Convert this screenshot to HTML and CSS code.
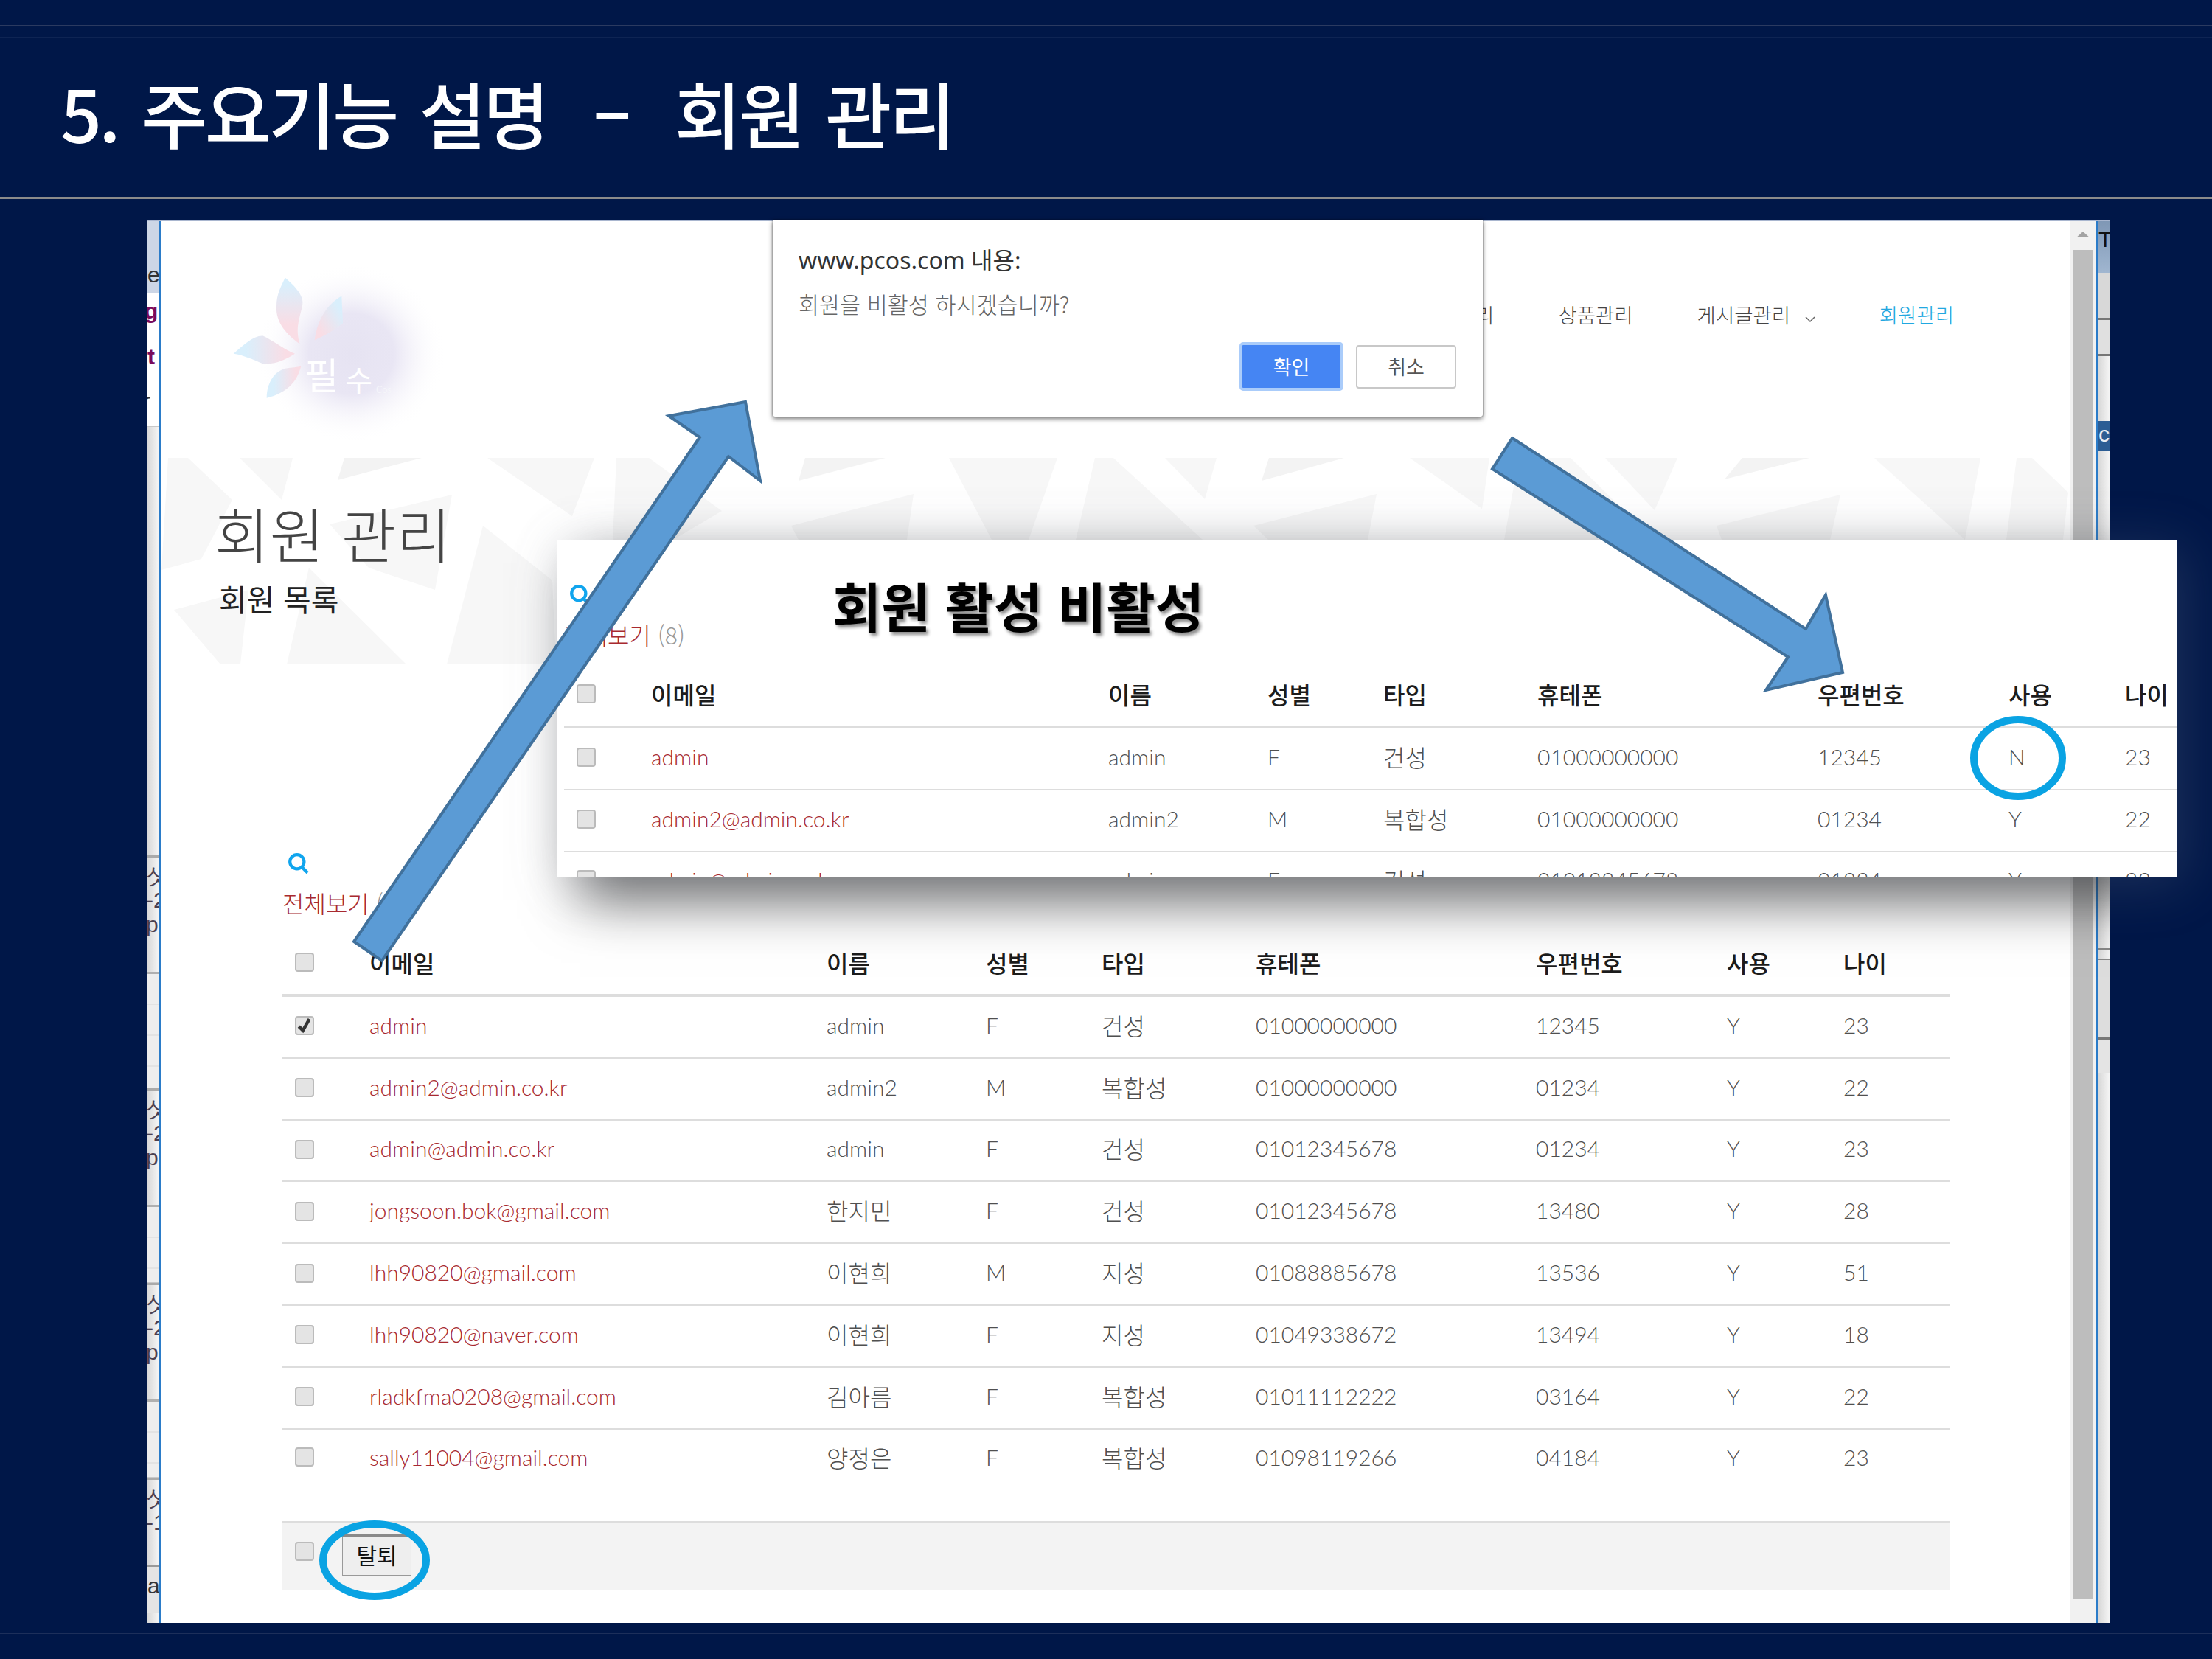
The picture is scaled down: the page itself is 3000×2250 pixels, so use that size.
FILE: index.html
```html
<!DOCTYPE html>
<html lang="ko">
    <head>
        <meta charset="utf-8"/>
        <title>주요기능 설명 - 회원 관리</title>
        <link rel="stylesheet" href="styles.css">
    </head>
    <body>
        <div class="slide">
            <div class="topLine"></div>
            <div class="topLine faint"></div>
            <h1 class="slideTitle">5. 주요기능 설명  –  회원 관리</h1>

            <div class="shot">
                <div class="stripLeft">
                    <div class="sl sl1">e</div>
                    <div class="sl sl2">g</div>
                    <div class="sl sl3">t</div>
                    <div class="sl sl4">r</div>
                    <div class="sl sl5"></div>
                    <div class="sl sl6">싯<br>-2<br>p</div>
                    <div class="sl sl7"></div>
                    <div class="sl sl6">싯<br>-2<br>p</div>
                    <div class="sl sl7 short"></div>
                    <div class="sl sl6">싯<br>-2<br>p</div>
                    <div class="sl sl7 short"></div>
                    <div class="sl sl6 last">싯<br>-1</div>
                    <div class="sl sl8">a</div>
                </div>

                <div class="shotMain">
                    <div class="siteTop">
                        <svg class="logo" viewBox="300 150 1050 800">
                            <defs>
                                <radialGradient id="blob">
                                    <stop offset="0" stop-color="#e6e3f2"/>
                                    <stop offset=".45" stop-color="#e9e6f4"/>
                                    <stop offset="1" stop-color="#ffffff" stop-opacity="0"/>
                                </radialGradient>
                                <linearGradient id="petalDown" x1="0" y1="0" x2="0" y2="1">
                                    <stop offset=".1" stop-color="#d9effc"/>
                                    <stop offset=".7" stop-color="#f9dde5"/>
                                </linearGradient>
                                <linearGradient id="petalSide" x1="1" y1="0" x2="0" y2="1">
                                    <stop offset=".2" stop-color="#d9effc"/>
                                    <stop offset=".8" stop-color="#f9dde5"/>
                                </linearGradient>
                                <linearGradient id="petalRight" x1="0" y1="0" x2="1" y2="0">
                                    <stop offset=".2" stop-color="#d9effc"/>
                                    <stop offset=".85" stop-color="#f9dde5"/>
                                </linearGradient>
                            </defs>
                            <ellipse cx="830" cy="545" rx="385" ry="365" fill="url(#blob)"/>
                            <path d="M560 235C600 270 640 310 630 350C620 400 600 440 620 505C570 470 520 420 525 350C525 300 545 270 560 235Z" fill="url(#petalDown)"/>
                            <path d="M790 310L795 420C760 450 720 470 680 490C690 420 720 350 790 310Z" fill="url(#petalSide)"/>
                            <path d="M350 545C390 510 430 470 470 472C510 490 560 530 600 545C560 570 520 590 470 585C430 570 390 550 350 545Z" fill="url(#petalRight)"/>
                            <path d="M625 595C610 650 580 700 485 725C485 670 510 620 560 605C590 600 610 600 625 595Z" fill="url(#petalRight)"/>
                            <text class="logoWord" x="640" y="690" font-size="150">필</text>
                            <text class="logoWord" x="805" y="700" font-size="120">수</text>
                            <text class="logoCos" x="930" y="706" font-size="38">Cos</text>
                        </svg>
                        <nav class="siteNav">
                            <a>주문관리</a>
                            <a>상품관리</a>
                            <a>게시글관리
                                <svg class="chevron" viewBox="0 0 14 9"><path d="M1 1l6 6 6-6"/></svg>
                            </a>
                            <a class="active">회원관리</a>
                        </nav>
                    </div>

                    <div class="pageHead">
                        <svg class="watermark" viewBox="219 621 2588 280" preserveAspectRatio="none">
                            <polygon points="228,621 255,621 315,678 273,758 219,773"/>
                            <polygon points="325,621 397,621 382,678"/>
                            <polygon class="wmDark" points="467,621 572,621 458,651"/>
                            <polygon points="613,671 447,711 500,770 590,800"/>
                            <polygon points="236,827 337,800 326,901 299,901"/>
                            <polygon points="419,770 551,901 389,901"/>
                            <polygon points="655,713 749,787 754,901 606,901"/>
                            <polygon points="661,621 806,621 776,700"/>
                            <polygon points="836,621 880,621 979,693 913,732 831,732"/>
                            <polygon class="wmDark" points="1092,621 1201,621 1083,652"/>
                            <polygon points="1073,713 1239,670 1230,732 1083,732"/>
                            <polygon points="1287,621 1434,621 1395,732 1345,732"/>
                            <polygon points="1485,621 1510,621 1631,732 1459,732"/>
                            <polygon points="1580,621 1650,621 1634,677"/>
                            <polygon class="wmDark" points="1721,621 1823,621 1711,652"/>
                            <polygon points="1867,670 1855,732 1720,732 1700,713"/>
                            <polygon points="1912,621 2020,621 2010,690"/>
                            <polygon points="2060,621 2130,621 2200,690 2180,732 2040,732"/>
                            <polygon points="2177,621 2275,621 2244,692"/>
                            <polygon class="wmDark" points="2363,621 2454,621 2339,650"/>
                            <polygon points="2496,671 2328,713 2335,732 2482,732"/>
                            <polygon points="2542,621 2686,621 2665,732"/>
                            <polygon points="2735,621 2756,621 2805,668 2798,732 2721,732"/>
                        </svg>
                        <h2 class="pageTitle">회원 관리</h2>
                        <p class="pageSub">회원 목록</p>
                    </div>

                    <div class="memberList">
                        <svg class="searchIcon" viewBox="0 0 30 30"><circle cx="12" cy="12" r="9"/><path d="M18.500 19l7 7"/></svg>
                        <div class="showAll"><a>전체보기</a> <span>(8)</span></div>
                        <table class="members">
                            <colgroup>
                                <col class="c0"><col class="c1"><col class="c2"><col class="c3"><col class="c4"><col class="c5"><col class="c6"><col class="c7"><col class="c8">
                            </colgroup>
                            <thead>
                                <tr><th><span class="chk"></span></th><th>이메일</th><th>이름</th><th>성별</th><th>타입</th><th>휴테폰</th><th>우편번호</th><th>사용</th><th>나이</th></tr>
                            </thead>
                            <tbody>
                                <tr><td><span class="chk checked"><svg viewBox="0 0 20 20"><path d="M3 11l5 5 8-14"/></svg></span></td><td><a>admin</a></td><td>admin</td><td>F</td><td class="ko">건성</td><td>01000000000</td><td>12345</td><td>Y</td><td>23</td></tr>
                                <tr><td><span class="chk"></span></td><td><a>admin2@admin.co.kr</a></td><td>admin2</td><td>M</td><td class="ko">복합성</td><td>01000000000</td><td>01234</td><td>Y</td><td>22</td></tr>
                                <tr><td><span class="chk"></span></td><td><a>admin@admin.co.kr</a></td><td>admin</td><td>F</td><td class="ko">건성</td><td>01012345678</td><td>01234</td><td>Y</td><td>23</td></tr>
                                <tr><td><span class="chk"></span></td><td><a>jongsoon.bok@gmail.com</a></td><td class="ko">한지민</td><td>F</td><td class="ko">건성</td><td>01012345678</td><td>13480</td><td>Y</td><td>28</td></tr>
                                <tr><td><span class="chk"></span></td><td><a>lhh90820@gmail.com</a></td><td class="ko">이현희</td><td>M</td><td class="ko">지성</td><td>01088885678</td><td>13536</td><td>Y</td><td>51</td></tr>
                                <tr><td><span class="chk"></span></td><td><a>lhh90820@naver.com</a></td><td class="ko">이현희</td><td>F</td><td class="ko">지성</td><td>01049338672</td><td>13494</td><td>Y</td><td>18</td></tr>
                                <tr><td><span class="chk"></span></td><td><a>rladkfma0208@gmail.com</a></td><td class="ko">김아름</td><td>F</td><td class="ko">복합성</td><td>01011112222</td><td>03164</td><td>Y</td><td>22</td></tr>
                                <tr><td><span class="chk"></span></td><td><a>sally11004@gmail.com</a></td><td class="ko">양정은</td><td>F</td><td class="ko">복합성</td><td>01098119266</td><td>04184</td><td>Y</td><td>23</td></tr>
                            </tbody>
                        </table>
                        <div class="listFoot">
                            <span class="chk"></span>
                            <button class="leaveBtn">탈퇴</button>
                        </div>
                    </div>
                </div>

                <div class="scrollTrack">
                    <div class="scrollUp"></div>
                    <div class="scrollThumb"></div>
                </div>

                <div class="stripRight">
                    <div class="sr sr1">T_</div>
                    <div class="sr sr2"></div>
                    <div class="sr sr3"></div>
                    <div class="sr sr4"></div>
                    <div class="sr sr5">co</div>
                    <div class="sr sr6"></div>
                    <div class="sr sr7"></div>
                    <div class="sr sr8"></div>
                    <div class="sr sr9"></div>
                </div>

                <div class="overlayShadow"></div>
            </div>

            <div class="slideFoot"></div>

            <div class="alertBox">
                <div class="alertHost">www.pcos.com 내용:</div>
                <div class="alertText">회원을 비활성 하시겠습니까?</div>
                <div class="alertBtns">
                    <button class="okBtn">확인</button>
                    <button class="cancelBtn">취소</button>
                </div>
            </div>

            <div class="overlay">
                <div class="overlayTitle">회원 활성 비활성</div>
                <svg class="searchIcon" viewBox="0 0 30 30"><circle cx="12" cy="12" r="9"/><path d="M18.500 19l7 7"/></svg>
                <div class="showAll"><a>전체보기</a> <span>(8)</span></div>
                <table class="members">
                    <colgroup>
                        <col class="c0"><col class="c1"><col class="c2"><col class="c3"><col class="c4"><col class="c5"><col class="c6"><col class="c7"><col class="c8">
                    </colgroup>
                    <thead>
                        <tr><th><span class="chk"></span></th><th>이메일</th><th>이름</th><th>성별</th><th>타입</th><th>휴테폰</th><th>우편번호</th><th>사용</th><th>나이</th></tr>
                    </thead>
                    <tbody>
                        <tr><td><span class="chk"></span></td><td><a>admin</a></td><td>admin</td><td>F</td><td class="ko">건성</td><td>01000000000</td><td>12345</td><td>N</td><td>23</td></tr>
                        <tr><td><span class="chk"></span></td><td><a>admin2@admin.co.kr</a></td><td>admin2</td><td>M</td><td class="ko">복합성</td><td>01000000000</td><td>01234</td><td>Y</td><td>22</td></tr>
                        <tr><td><span class="chk"></span></td><td><a>admin@admin.co.kr</a></td><td>admin</td><td>F</td><td class="ko">건성</td><td>01012345678</td><td>01234</td><td>Y</td><td>23</td></tr>
                    </tbody>
                </table>
            </div>

            <svg class="marks" viewBox="0 0 3000 2250">
                <polygon class="arrow" points="1011,545 907,564 949,593 480,1277 518,1303 988,619 1031,652"/>
                <polygon class="arrow" points="2051,594 2024,636 2425,891 2395,936 2499,912 2476,807 2449,853"/>
                <ellipse class="ring" cx="2737" cy="1028" rx="60" ry="52"/>
                <ellipse class="ring" cx="508" cy="2116" rx="70" ry="49"/>
            </svg>
        </div>
    </body>
</html>
```
FILE: styles.css
```css
* {
    box-sizing: border-box;
}

html, body {
    margin: 0;
    background: #001748;
}

body {
    font-family: "Lato", "Noto Sans CJK KR", sans-serif;
    font-weight: 300;
    color: #555555;
}

.slide {
    position: relative;
    width: 3000px;
    height: 2250px;
    overflow: hidden;
    background: #001748;
}

.topLine {
    height: 35px;
    border-bottom: 1px solid #2b3a60;
}

.topLine.faint {
    height: 16px;
    border-bottom: 1px solid #0e2453;
}

.slideTitle {
    height: 219px;
    margin: 0;
    padding: 35px 0 0 82px;
    border-bottom: 3px solid #8b8b8b;
    font-family: "Noto Sans CJK KR", sans-serif;
    font-size: 98px;
    font-weight: 500;
    letter-spacing: -3.500px;
    word-spacing: 7px;
    line-height: 130px;
    color: white;
    white-space: pre;
}

/* the browser screenshot */
.shot {
    position: relative;
    display: flex;
    width: 2661px;
    height: 1903px;
    margin: 28px 0 0 200px;
    overflow: hidden;
    border-top: 2px solid #a9b6cf;
    background: white;
}

.slideFoot {
    margin-top: 14px;
    border-top: 1px solid #1d2f5a;
}

.stripLeft {
    flex: none;
    width: 19px;
    overflow: hidden;
    border-right: 3px solid #2b7cc9;
    background: linear-gradient(to right, #d8d8d8, #f7f7f7);
    font-family: "Liberation Sans", sans-serif;
    font-size: 30px;
    font-weight: 400;
    line-height: 32px;
    color: #333333;
}

.sl {
    overflow: hidden;
    white-space: nowrap;
    border-bottom: 1px solid #c8c8c8;
}

.sl1 {
    height: 98px;
    padding-top: 57px;
    background: #ccd6e6;
    border-bottom-color: #bbbbbb;
}

.sl2 {
    height: 62px;
    padding-top: 8px;
    margin-left: -4px;
    border: 0;
    background: #ffffff;
    font-weight: 700;
    color: #7a0a5c;
}

.sl3 {
    height: 62px;
    padding-top: 8px;
    border: 0;
    background: #ffffff;
    font-weight: 700;
    color: #7a0a5c;
}

.sl4 {
    height: 56px;
    padding-top: 6px;
    margin-left: -6px;
    border: 0;
    background: #ffffff;
}

.sl5 {
    height: 582px;
    border-top: 1px solid #c8c8c8;
}

.sl6 {
    height: 158px;
    padding-top: 8px;
    margin-left: -2px;
    border-top: 3px solid #aaaaaa;
    border-bottom: 0;
    line-height: 33px;
    color: #4a4050;
}

.sl6.last {
    height: 118px;
}

.sl7 {
    height: 158px;
    border-top: 3px solid #b0b0b0;
    background: repeating-linear-gradient(#eeeeee 0 40px, #d8d8d8 41px, #eeeeee 42px);
}

.sl7.short {
    height: 106px;
}

.sl8 {
    height: 66px;
    padding-top: 10px;
    border-top: 3px solid #999999;
    border-bottom: 0;
    background: #e4e4e4;
}

.shotMain {
    flex: none;
    width: 2588px;
    position: relative;
}

.siteTop {
    display: flex;
    height: 321px;
}

.logo {
    flex: none;
    width: 350px;
    height: 267px;
    margin: 48px 0 0 81px;
}

.logoWord {
    font-family: "Noto Sans CJK KR", sans-serif;
    font-weight: 400;
    fill: white;
}

.logoCos {
    font-family: "Lato", sans-serif;
    font-weight: 400;
    fill: #f5f5fa;
}

.siteNav {
    display: flex;
    gap: 87px;
    margin: 106px 0 0 auto;
    padding-right: 157px;
    height: 40px;
    font-family: "Noto Sans CJK KR", sans-serif;
    font-size: 27.500px;
    font-weight: 300;
    line-height: 40px;
    color: #444444;
}

.siteNav a {
    white-space: nowrap;
}

.siteNav .active {
    color: #23a7e0;
}

.chevron {
    width: 14px;
    height: 9px;
    margin-left: 12px;
    fill: none;
    stroke: #666666;
    stroke-width: 1.500;
}

.pageHead {
    position: relative;
    height: 280px;
    padding: 56px 0 0 72px;
}

.watermark {
    position: absolute;
    top: 0;
    left: 0;
    width: 100%;
    height: 100%;
    fill: #f7f7f7;
}

.wmDark {
    fill: #f3f3f3;
}

.pageTitle {
    position: relative;
    margin: 0;
    font-family: "Noto Sans CJK KR", sans-serif;
    font-size: 81px;
    font-weight: 300;
    line-height: 90px;
    color: #444444;
}

.pageSub {
    position: relative;
    margin: 19px 0 0 6px;
    font-family: "Noto Sans CJK KR", sans-serif;
    font-size: 41px;
    font-weight: 400;
    line-height: 50px;
    color: #222222;
}

.memberList {
    width: 2425px;
    padding: 255px 0 0 164px;
}

.searchIcon {
    display: block;
    width: 32px;
    height: 32px;
    margin-left: 7px;
    fill: none;
    stroke: #10a5ee;
    stroke-width: 4;
}

.showAll {
    height: 44px;
    margin: 14px 0 19px;
    font-family: "Noto Sans CJK KR", sans-serif;
    font-size: 32px;
    line-height: 44px;
    color: #999999;
}

.showAll a {
    color: #a82a30;
}

.members {
    width: 2261px;
    table-layout: fixed;
    border-collapse: separate;
    border-spacing: 0;
}

.c0 { width: 118px; }
.c1 { width: 620px; }
.c2 { width: 216px; }
.c3 { width: 157px; }
.c4 { width: 209px; }
.c5 { width: 380px; }
.c6 { width: 259px; }
.c7 { width: 158px; }
.c8 { width: 144px; }

.members th {
    height: 87px;
    padding: 0 0 3px;
    border-bottom: 4px solid #dddddd;
    font-family: "Noto Sans CJK KR", sans-serif;
    font-size: 32px;
    font-weight: 500;
    text-align: left;
    color: #1c1c1c;
}

.members td {
    height: 83.800px;
    padding: 0 0 6px;
    border-bottom: 2px solid #dddddd;
    font-size: 30px;
    color: #505050;
    white-space: nowrap;
}

.members tbody tr:last-child td {
    padding-bottom: 8px;
    border-bottom: 0;
}

.members td:first-child {
    padding: 0 0 3px;
}

.members .ko {
    font-family: "Noto Sans CJK KR", sans-serif;
    font-size: 32px;
}

.members a {
    color: #a82a30;
}

.chk {
    display: block;
    width: 26px;
    height: 26px;
    margin-left: 17px;
    border: 2px solid #bbbbbb;
    border-radius: 4px;
    background: #e4e4e4;
}

.chk svg {
    display: block;
    width: 100%;
    height: 100%;
    fill: none;
    stroke: #333333;
    stroke-width: 4;
}

.listFoot {
    display: flex;
    height: 93px;
    margin-top: 41px;
    border-top: 2px solid #dddddd;
    background: #f3f3f3;
}

.listFoot .chk {
    margin-top: 26px;
}

.leaveBtn {
    width: 94px;
    height: 56px;
    margin: 16px 0 0 38px;
    padding: 0 0 4px;
    border: 1px solid #999999;
    border-top: 3px solid #8a8a8a;
    background: #eeeeee;
    font-family: "Noto Sans CJK KR", sans-serif;
    font-size: 30px;
    font-weight: 400;
    color: #111111;
}

.scrollTrack {
    flex: none;
    display: flex;
    flex-direction: column;
    width: 36px;
    height: 100%;
    padding-left: 4px;
    background: #f1f1f1;
}

.scrollUp {
    width: 0;
    height: 0;
    margin: 14px 0 17px 6px;
    border: 8px solid transparent;
    border-top: 0;
    border-bottom: 8px solid #a3a3a3;
    transform: scaleX(1.100);
}

.scrollThumb {
    width: 28px;
    height: 1830px;
    background: #bdbdbd;
}

.stripRight {
    flex: none;
    width: 18px;
    height: 100%;
    overflow: hidden;
    border-left: 3px solid #2b7cc9;
    background: linear-gradient(to right, #d8d8d8, #f5f5f5);
    font-family: "Liberation Sans", sans-serif;
    font-size: 30px;
    font-weight: 400;
}

.sr1 {
    height: 70px;
    padding-top: 8px;
    background: linear-gradient(#7f97b5, #a0b6d0);
    color: #111111;
}

.sr2 {
    height: 64px;
    border-bottom: 3px solid #777777;
    background: #d8d8d8;
}

.sr3 {
    height: 49px;
    border-bottom: 3px solid #777777;
    background: #e0e0e0;
}

.sr4 {
    height: 88px;
}

.sr5 {
    height: 41px;
    background: #2c5d94;
    color: #e8eef5;
    line-height: 36px;
}

.sr6 {
    height: 674px;
}

.sr7 {
    height: 16px;
    border-top: 2px solid #888888;
    border-bottom: 2px solid #888888;
}

.sr8 {
    height: 108px;
    border-bottom: 3px solid #777777;
    background: #dddddd;
}

.sr9 {
    height: 45px;
    background: #e4e4e4;
}

/* dark shadow falls only on the screenshot, not on the navy slide */
.overlayShadow {
    position: absolute;
    top: 432px;
    left: 556px;
    width: 2196px;
    height: 457px;
    box-shadow: 30px 32px 70px rgba(0, 0, 0, 0.58);
}

.alertBox {
    position: absolute;
    top: 298px;
    left: 1048px;
    width: 963px;
    height: 267px;
    padding: 33px 35px 0;
    border-radius: 0 0 3px 3px;
    background: white;
    box-shadow: 0 3px 6px rgba(0, 0, 0, 0.55), 0 0 2px rgba(0, 0, 0, 0.5);
    font-family: "Noto Sans", "Noto Sans CJK KR", sans-serif;
    font-weight: 400;
}

.alertHost {
    font-size: 32px;
    line-height: 44px;
    color: #333333;
}

.alertText {
    margin-top: 17px;
    font-family: "Noto Sans CJK KR", sans-serif;
    font-size: 30.500px;
    font-weight: 300;
    line-height: 40px;
    color: #666666;
}

.alertBtns {
    display: flex;
    justify-content: flex-end;
    align-items: center;
    gap: 17px;
    margin-top: 32px;
    margin-right: 1px;
}

.alertBtns button {
    padding: 0 0 2px;
    font-family: "Noto Sans CJK KR", sans-serif;
    font-size: 27px;
}

.okBtn {
    width: 141px;
    height: 66px;
    border: 4px solid #aaccfa;
    border-radius: 5px;
    background: #4585f3;
    color: white;
}

.cancelBtn {
    width: 136px;
    height: 59px;
    border: 2px solid #c8c8c8;
    border-radius: 4px;
    background: white;
    color: #555555;
}

.overlay {
    position: absolute;
    top: 732px;
    left: 756px;
    width: 2196px;
    height: 457px;
    padding: 60px 0 0 9px;
    overflow: hidden;
    background: white;
    box-shadow: 10px 10px 70px rgba(130, 140, 160, 0.22);
}

.overlayTitle {
    position: absolute;
    top: 38px;
    left: 373px;
    font-family: "Noto Sans CJK KR", sans-serif;
    font-size: 72px;
    font-weight: 700;
    line-height: 100px;
    color: #000000;
    text-shadow: 3px 4px 4px rgba(0, 0, 0, 0.45);
}

.marks {
    position: absolute;
    top: 0;
    left: 0;
    width: 3000px;
    height: 2250px;
}

.arrow {
    fill: #5b9bd5;
    stroke: #41719c;
    stroke-width: 4;
}

.ring {
    fill: none;
    stroke: #0aa3e3;
    stroke-width: 10;
}
```
